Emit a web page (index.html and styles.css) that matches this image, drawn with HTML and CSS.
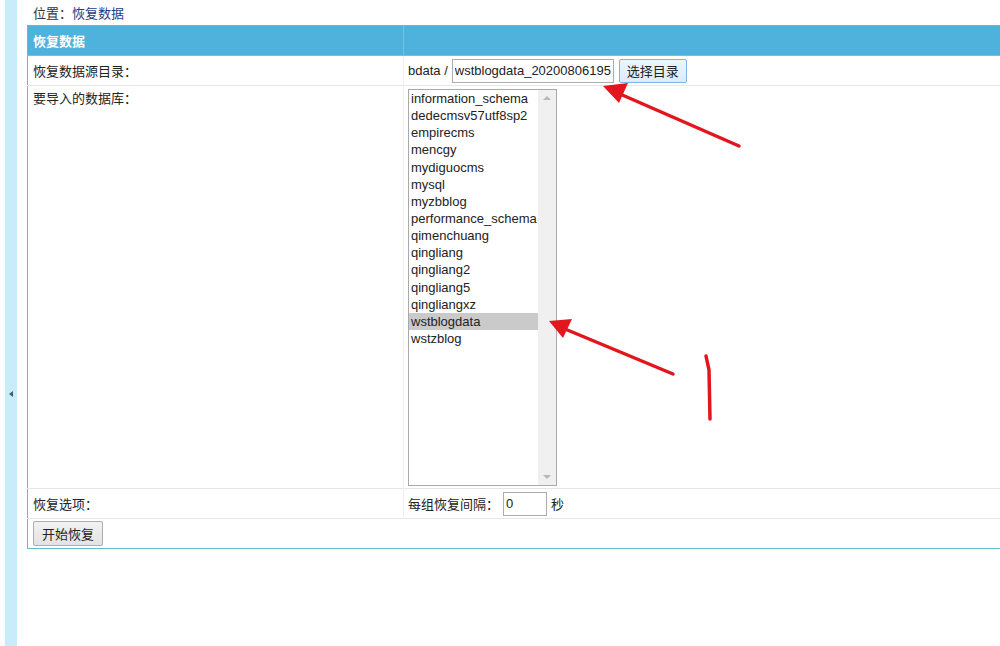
FILE: index.html
```html
<!DOCTYPE html>
<html lang="zh-CN">
<head>
    <meta charset="UTF-8">
    <title>恢复数据</title>
    <link rel="stylesheet" href="styles.css">
</head>
<body>
    <div class="layout">
        <div class="sidebar">
            <div class="strip"><span class="toggle"></span></div>
        </div>
        <div class="main">
            <div class="crumb">位置：<a href="#">恢复数据</a></div>
            <table class="form-table">
                <tr class="head">
                    <td class="col-label">恢复数据</td>
                    <td></td>
                </tr>
                <tr>
                    <td class="col-label">恢复数据源目录：</td>
                    <td>
                        <div class="field">
                            <span>bdata /</span>
                            <input type="text" class="path-input" value="wstblogdata_20200806195">
                            <button class="btn btn-focus">选择目录</button>
                        </div>
                    </td>
                </tr>
                <tr class="tall">
                    <td class="col-label top">要导入的数据库：</td>
                    <td class="top">
                        <div class="listbox">
                            <ul class="options">
                                <li>information_schema</li>
                                <li>dedecmsv57utf8sp2</li>
                                <li>empirecms</li>
                                <li>mencgy</li>
                                <li>mydiguocms</li>
                                <li>mysql</li>
                                <li>myzbblog</li>
                                <li>performance_schema</li>
                                <li>qimenchuang</li>
                                <li>qingliang</li>
                                <li>qingliang2</li>
                                <li>qingliang5</li>
                                <li>qingliangxz</li>
                                <li class="selected">wstblogdata</li>
                                <li>wstzblog</li>
                            </ul>
                            <div class="scrollbar">
                                <span class="arrow-up"></span>
                                <span class="arrow-down"></span>
                            </div>
                        </div>
                    </td>
                </tr>
                <tr>
                    <td class="col-label">恢复选项：</td>
                    <td>
                        <div class="field">
                            <span>每组恢复间隔：</span>
                            <input type="text" class="num-input" value="0">
                            <span>秒</span>
                        </div>
                    </td>
                </tr>
                <tr>
                    <td colspan="2" class="col-label"><button class="btn btn-start">开始恢复</button></td>
                </tr>
            </table>
        </div>
    </div>

    <!-- 截图上的红色标注 -->
    <svg class="marks" width="1000" height="646" viewBox="0 0 1000 646">
        <g stroke="#e2161e" stroke-width="3.5" stroke-linecap="round" fill="none">
            <line x1="739" y1="146" x2="620" y2="94"/>
            <line x1="673" y1="374" x2="565" y2="329"/>
            <polyline points="706,356 709,370 710,419"/>
        </g>
        <g fill="#e2161e">
            <polygon points="603,86 628,83 619,103"/>
            <polygon points="549,321 572,319 563,338"/>
        </g>
    </svg>
</body>
</html>
```

FILE: styles.css
```css
body {
    margin: 0;
    padding: 0;
    font-family: 'Liberation Sans', 'Noto Sans CJK SC', sans-serif;
    font-size: 13px;
    color: #222;
    background-color: #fff;
    overflow: hidden;
    height: 646px;
}
.layout {
    display: flex;
    height: 646px;
}
.sidebar {
    width: 17px;
    padding-left: 5px;
    box-sizing: border-box;
    flex-shrink: 0;
    background-color: #fbfdfe;
}
.strip {
    width: 12px;
    height: 100%;
    box-sizing: border-box;
    padding-top: 391px;
    background-color: #c9ecfb;
    display: flex;
    justify-content: center;
}
.toggle {
    width: 0;
    height: 0;
    border-top: 3px solid transparent;
    border-bottom: 3px solid transparent;
    border-right: 4px solid #4a5a66;
}
.main {
    padding-left: 10px;
    width: 1000px;
    flex-shrink: 0;
}
.crumb {
    height: 25px;
    line-height: 27px;
    padding-left: 6px;
    color: #333;
}
.crumb a {
    color: #1e3c84;
    text-decoration: none;
}
.form-table {
    width: 1000px;
    border-collapse: collapse;
    border: 1px solid #62bccb;
}
.form-table td {
    height: 29px;
    padding: 0 4px;
    border-top: 1px solid #e6e6e6;
    border-left: 1px solid #eeeeee;
    vertical-align: middle;
    white-space: nowrap;
}
.form-table td.col-label {
    width: 366px;
    padding-left: 5px;
    border-left: none;
}
.form-table .top {
    vertical-align: top;
}
.head td {
    background-color: #4fb2dd;
    color: #fff;
    font-weight: bold;
    border-top: none;
    border-bottom: 1px solid #6ec3e6;
    border-left: 1px solid #72c4e6;
}
.head td.col-label {
    border-left: none;
}
.tall td {
    height: 400px;
    padding-top: 3px;
    padding-bottom: 2px;
    box-sizing: border-box;
}
.form-table .tall td.col-label {
    padding-top: 2px;
}
.field {
    display: flex;
    align-items: center;
    gap: 4px;
}
.path-input, .num-input {
    font-family: inherit;
    font-size: 13px;
    color: #222;
    height: 24px;
    box-sizing: border-box;
    border: 1px solid #acacac;
    padding: 0 2px;
    margin: 0;
}
.path-input {
    width: 162px;
}
.num-input {
    width: 44px;
}
.btn {
    font-family: inherit;
    font-size: 13px;
    color: #222;
    height: 24px;
    padding: 0 7px;
    border: 1px solid #adadad;
    border-radius: 2px;
    background: linear-gradient(#f2f2f2, #e3e3e3);
    margin: 0;
}
.btn-focus {
    border-color: #7eb4ea;
    background: linear-gradient(#ecf4fc, #dcecfc);
    margin-left: 1px;
}
.btn-start {
    height: 25px;
    padding: 0 8px;
}
.listbox {
    width: 149px;
    height: 397px;
    border: 1px solid #a9a9a9;
    display: flex;
    box-sizing: border-box;
}
.options {
    list-style: none;
    margin: 0;
    padding: 0;
    flex: 1;
}
.options li {
    height: 17.15px;
    line-height: 17px;
    padding-left: 2px;
    overflow: hidden;
}
.options li.selected {
    background-color: #cacaca;
}
.scrollbar {
    width: 18px;
    background-color: #f0f0f0;
    display: flex;
    flex-direction: column;
    justify-content: space-between;
    align-items: center;
    padding: 6px 0;
}
.arrow-up, .arrow-down {
    width: 0;
    height: 0;
    border-left: 4px solid transparent;
    border-right: 4px solid transparent;
}
.arrow-up {
    border-bottom: 4px solid #b8b8b8;
}
.arrow-down {
    border-top: 4px solid #b8b8b8;
}
.marks {
    position: absolute;
    left: 0;
    top: 0;
    pointer-events: none;
}
```
